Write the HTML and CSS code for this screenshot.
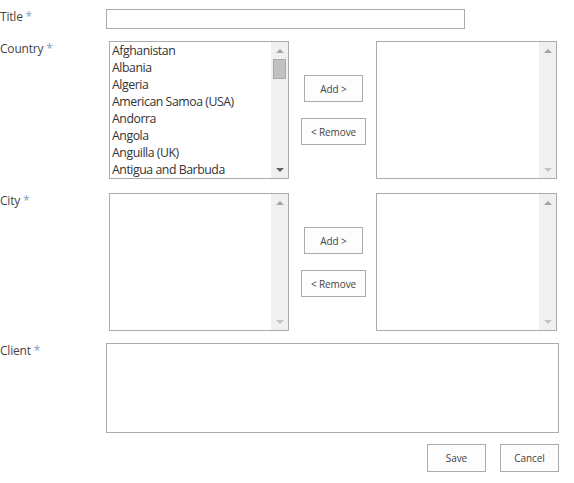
FILE: index.html
```html
<!DOCTYPE html>
<html>
<head>
<meta charset="utf-8">
<link rel="stylesheet" href="styles.css">
</head>
<body>
<form class="form">
  <div class="row row-title">
    <label class="label">Title <span class="req">*</span></label>
    <input class="text-input" type="text">
  </div>

  <div class="row row-picker">
    <label class="label">Country <span class="req">*</span></label>
    <div class="picker">
      <div class="listbox">
        <ul class="items">
          <li>Afghanistan</li>
          <li>Albania</li>
          <li>Algeria</li>
          <li>American Samoa (USA)</li>
          <li>Andorra</li>
          <li>Angola</li>
          <li>Anguilla (UK)</li>
          <li>Antigua and Barbuda</li>
        </ul>
        <div class="scrollbar">
          <span class="arrow up"></span>
          <div class="track"><div class="thumb"></div></div>
          <span class="arrow down active"></span>
        </div>
      </div>
      <div class="mover">
        <button type="button" class="btn btn-add">Add &gt;</button>
        <button type="button" class="btn btn-remove">&lt; Remove</button>
      </div>
      <div class="listbox listbox-right">
        <ul class="items"></ul>
        <div class="scrollbar">
          <span class="arrow up"></span>
          <div class="track"></div>
          <span class="arrow down"></span>
        </div>
      </div>
    </div>
  </div>

  <div class="row row-picker">
    <label class="label">City <span class="req">*</span></label>
    <div class="picker">
      <div class="listbox">
        <ul class="items"></ul>
        <div class="scrollbar">
          <span class="arrow up"></span>
          <div class="track"></div>
          <span class="arrow down"></span>
        </div>
      </div>
      <div class="mover">
        <button type="button" class="btn btn-add">Add &gt;</button>
        <button type="button" class="btn btn-remove">&lt; Remove</button>
      </div>
      <div class="listbox listbox-right">
        <ul class="items"></ul>
        <div class="scrollbar">
          <span class="arrow up"></span>
          <div class="track"></div>
          <span class="arrow down"></span>
        </div>
      </div>
    </div>
  </div>

  <div class="row row-client">
    <label class="label">Client <span class="req">*</span></label>
    <textarea class="textarea"></textarea>
  </div>

  <div class="actions">
    <button type="button" class="btn btn-action">Save</button>
    <button type="button" class="btn btn-action">Cancel</button>
  </div>
</form>
</body>
</html>
```

FILE: styles.css
```css
html, body {
  margin: 0;
  padding: 0;
  background: #ffffff;
}

body {
  font-family: "Open Sans", "Noto Sans", "Liberation Sans", sans-serif;
  font-size: 12px;
  color: #444444;
}

.form {
  display: flex;
  flex-direction: column;
  padding-top: 9px;
  width: 574px;
}

.row {
  display: flex;
  align-items: flex-start;
}

.label {
  width: 106px;
  flex: none;
  line-height: 17px;
  margin-top: -1px;
  color: #444444;
  letter-spacing: -0.2px;
}

.req {
  color: #7a9fc6;
}

.text-input {
  box-sizing: border-box;
  width: 359px;
  height: 20px;
  margin: 0;
  border: 1px solid #ababab;
  background: #ffffff;
  padding: 0 4px;
}

.row-picker {
  margin-top: 12px;
}

.row-picker + .row-picker {
  margin-top: 14px;
}

.picker {
  display: flex;
  align-items: flex-start;
  padding-left: 3px;
}

.listbox {
  box-sizing: border-box;
  width: 180px;
  height: 138px;
  border: 1px solid #ababab;
  background: #ffffff;
  display: flex;
  overflow: hidden;
}

.listbox-right {
  width: 181px;
}

.items {
  list-style: none;
  margin: 0;
  padding: 0 0 0 2px;
  flex: 1;
  min-width: 0;
}

.items li {
  line-height: 17px;
  height: 17px;
  white-space: nowrap;
  color: #333333;
  font-size: 12.3px;
  letter-spacing: -0.45px;
}

.scrollbar {
  flex: none;
  width: 17px;
  display: flex;
  flex-direction: column;
  background: #f0f0f0;
}

.arrow {
  flex: none;
  height: 17px;
  display: flex;
  align-items: center;
  justify-content: center;
}

.arrow::before {
  content: "";
  width: 0;
  height: 0;
  border-left: 4px solid transparent;
  border-right: 4px solid transparent;
}

.arrow.up::before {
  border-bottom: 4px solid #a3a3a3;
}

.arrow.down::before {
  border-top: 4px solid #c3c3c3;
}

.arrow.down.active::before {
  border-top-color: #606060;
}

.track {
  flex: 1;
  padding: 0 1px;
}

.thumb {
  box-sizing: border-box;
  height: 20px;
  background: #c1c1c1;
  border: 1px solid #a8a8a8;
  margin: 0 1px;
}

.mover {
  width: 87px;
  flex: none;
  display: flex;
  flex-direction: column;
  align-items: center;
  gap: 16px;
  padding-top: 34px;
  padding-left: 2px;
  box-sizing: border-box;
}

.btn {
  box-sizing: border-box;
  height: 27px;
  margin: 0;
  padding: 0;
  border: 1px solid #ababab;
  background: #fdfdfd;
  font-family: "Open Sans", "Noto Sans", "Liberation Sans", sans-serif;
  font-size: 10px;
  letter-spacing: -0.1px;
  color: #444444;
}

.btn-add {
  width: 59px;
}

.btn-remove {
  width: 65px;
}

.row-client {
  margin-top: 12px;
}

.textarea {
  box-sizing: border-box;
  width: 453px;
  height: 90px;
  margin: 0;
  border: 1px solid #ababab;
  background: #ffffff;
  resize: none;
  display: block;
}

.actions {
  display: flex;
  justify-content: flex-end;
  gap: 14px;
  margin-top: 11px;
  width: 559px;
}

.btn-action {
  width: 59px;
  height: 28px;
}
```
